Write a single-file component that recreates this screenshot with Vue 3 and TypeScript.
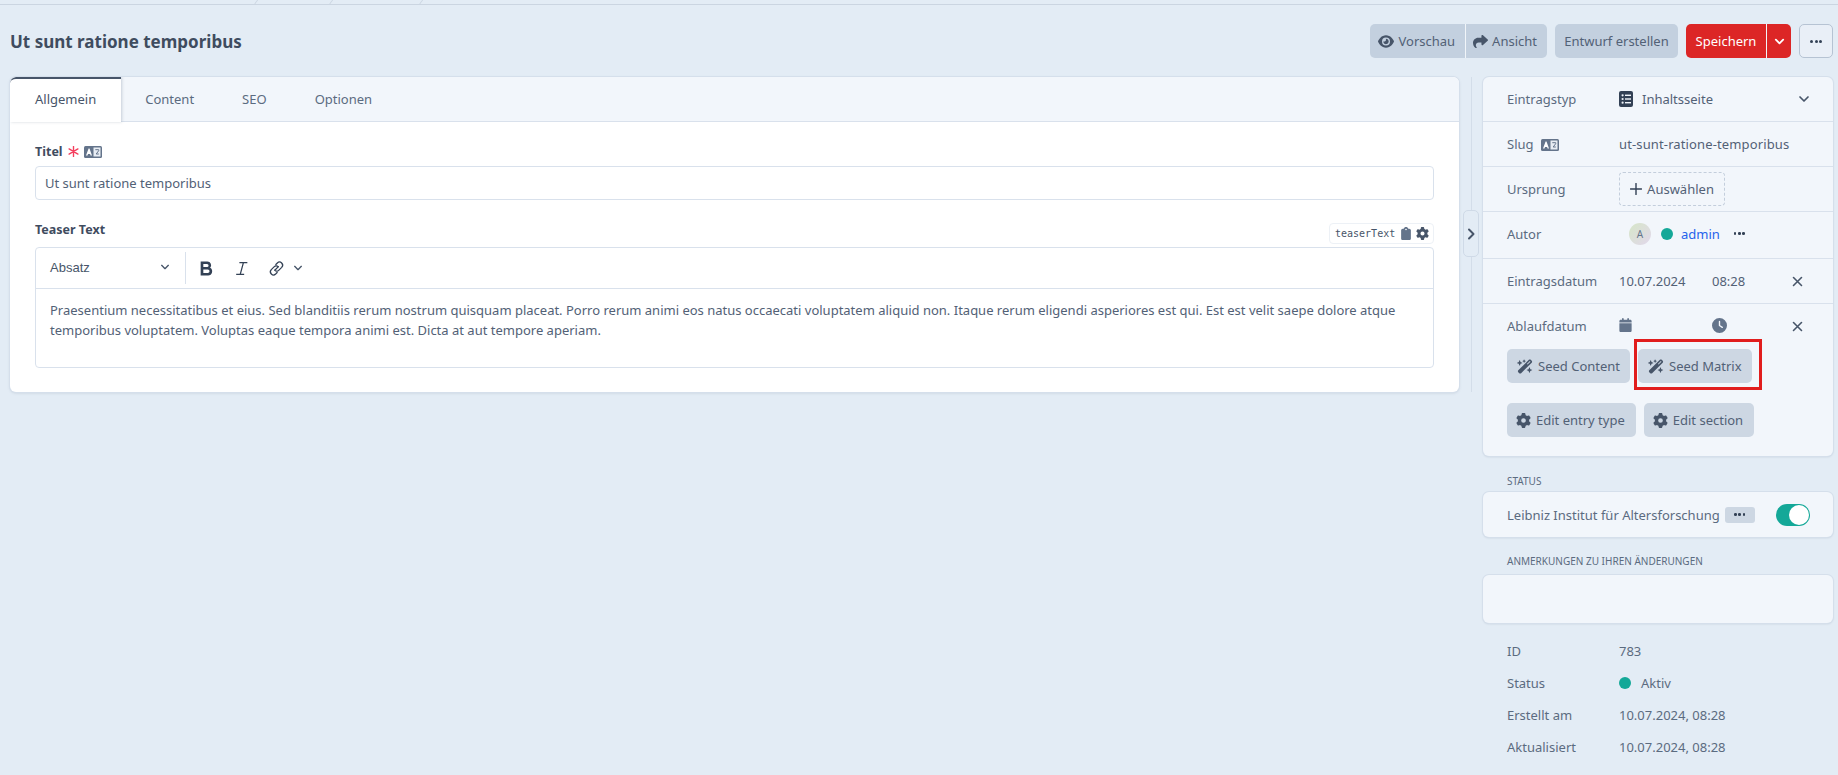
<script setup lang="ts">
const tabs = ['Allgemein', 'Content', 'SEO', 'Optionen']
const teaser = 'Praesentium necessitatibus et eius. Sed blanditiis rerum nostrum quisquam placeat. Porro rerum animi eos natus occaecati voluptatem aliquid non. Itaque rerum eligendi asperiores est qui. Est est velit saepe dolore atque temporibus voluptatem. Voluptas eaque tempora animi est. Dicta at aut tempore aperiam.'
const meta = [
  { label: 'ID', value: '783', dot: false },
  { label: 'Status', value: 'Aktiv', dot: true },
  { label: 'Erstellt am', value: '10.07.2024, 08:28', dot: false },
  { label: 'Aktualisiert', value: '10.07.2024, 08:28', dot: false },
]
const gear = 'M495.9 166.6c3.2 8.7 .5 18.4-6.4 24.6l-43.3 39.4c1.1 8.3 1.7 16.8 1.7 25.4s-.6 17.1-1.7 25.4l43.3 39.4c6.9 6.2 9.6 15.9 6.4 24.6c-4.4 11.9-9.7 23.3-15.8 34.3l-4.7 8.1c-6.6 11-14 21.4-22.1 31.2c-5.9 7.2-15.7 9.6-24.5 6.8l-55.7-17.7c-13.4 10.3-28.2 18.9-44 25.4l-12.5 57.1c-2 9.1-9 16.3-18.2 17.8c-13.8 2.3-28 3.5-42.5 3.5s-28.7-1.2-42.5-3.5c-9.2-1.5-16.2-8.7-18.2-17.8l-12.5-57.1c-15.8-6.5-30.6-15.1-44-25.4L83.1 425.9c-8.8 2.8-18.6 .3-24.5-6.8c-8.1-9.8-15.5-20.2-22.1-31.2l-4.7-8.1c-6.1-11-11.4-22.4-15.8-34.3c-3.2-8.7-.5-18.4 6.4-24.6l43.3-39.4C64.6 273.1 64 264.6 64 256s.6-17.1 1.7-25.4L22.4 191.2c-6.9-6.2-9.6-15.9-6.4-24.6c4.4-11.9 9.7-23.3 15.8-34.3l4.7-8.1c6.6-11 14-21.4 22.1-31.2c5.9-7.2 15.7-9.6 24.5-6.8l55.7 17.7c13.4-10.3 28.2-18.9 44-25.4l12.5-57.1c2-9.1 9-16.3 18.2-17.8C227.3 1.2 241.5 0 256 0s28.7 1.2 42.5 3.5c9.2 1.5 16.2 8.7 18.2 17.8l12.5 57.1c15.8 6.5 30.6 15.1 44 25.4l55.7-17.7c8.8-2.8 18.6-.3 24.5 6.8c8.1 9.8 15.5 20.2 22.1 31.2l4.7 8.1c6.1 11 11.4 22.4 15.8 34.3zM256 336a80 80 0 1 0 0-160 80 80 0 1 0 0 160z'
const wand = 'M234.7 42.7L197 56.8c-3 1.1-5 4-5 7.2s2 6.1 5 7.2l37.7 14.1L248.8 123c1.1 3 4 5 7.2 5s6.1-2 7.2-5l14.1-37.7L315 71.2c3-1.1 5-4 5-7.2s-2-6.1-5-7.2L277.3 42.7 263.2 5c-1.1-3-4-5-7.2-5s-6.1 2-7.2 5L234.7 42.7zM46.1 395.4c-18.7 18.7-18.7 49.1 0 67.9l34.6 34.6c18.7 18.7 49.1 18.7 67.9 0L529.9 116.5c18.7-18.7 18.7-49.1 0-67.9L495.3 14.1c-18.7-18.7-49.1-18.7-67.9 0L46.1 395.4zM484.6 82.6l-105 105-23.3-23.3 105-105 23.3 23.3zM7.5 117.2C3 118.9 0 123.2 0 128s3 9.1 7.5 10.8L64 160l21.2 56.5c1.7 4.5 6 7.5 10.8 7.5s9.1-3 10.8-7.5L128 160l56.5-21.2c4.5-1.7 7.5-6 7.5-10.8s-3-9.1-7.5-10.8L128 96 106.8 39.5C105.1 35 100.8 32 96 32s-9.1 3-10.8 7.5L64 96 7.5 117.2zm352 256c-4.5 1.7-7.5 6-7.5 10.8s3 9.1 7.5 10.8L416 416l21.2 56.5c1.7 4.5 6 7.5 10.8 7.5s9.1-3 10.8-7.5L480 416l56.5-21.2c4.5-1.7 7.5-6 7.5-10.8s-3-9.1-7.5-10.8L480 352l-21.2-56.5c-1.7-4.5-6-7.5-10.8-7.5s-9.1 3-10.8 7.5L416 352l-56.5 21.2z'
</script>

<template>
  <div class="page">
    <div class="crumbs">
      <span class="crumb c1"></span>
      <span class="crumb c2"></span>
      <span class="crumb c3"></span>
    </div>
    <header class="head">
      <h1>Ut sunt ratione temporibus</h1>
      <div class="actions">
        <div class="group">
          <button class="btn first view">
            <svg class="ic16" viewBox="0 0 576 512"><path d="M288 32c-80.8 0-145.5 36.8-192.6 80.6C48.6 156 17.3 208 2.5 243.7c-3.3 7.9-3.3 16.7 0 24.6C17.3 304 48.6 356 95.4 399.4C142.5 443.2 207.2 480 288 480s145.5-36.8 192.6-80.6c46.8-43.5 78.1-95.4 93-131.1c3.3-7.9 3.3-16.7 0-24.6c-14.9-35.7-46.2-87.7-93-131.1C433.5 68.8 368.8 32 288 32zM144 256a144 144 0 1 1 288 0 144 144 0 1 1 -288 0zm144-64c0 35.3-28.7 64-64 64c-7.1 0-13.9-1.2-20.3-3.3c-5.5-1.8-11.9 1.6-11.7 7.4c.3 6.9 1.3 13.8 3.2 20.7c13.7 51.2 66.4 81.6 117.6 67.9s81.6-66.4 67.9-117.6c-11.1-41.5-47.8-69.4-88.6-71.1c-5.8-.2-9.2 6.1-7.4 11.7c2.1 6.4 3.3 13.2 3.3 20.3z"/></svg>
            Vorschau
          </button>
          <button class="btn last view2">
            <svg class="ic15" viewBox="0 0 512 512"><path d="M307 34.8c-11.5 5.1-19 16.6-19 29.2v64H176C78.8 128 0 206.8 0 304C0 417.3 81.5 467.9 100.2 478.1c2.5 1.4 5.3 1.9 8.1 1.9c10.9 0 19.7-8.9 19.7-19.7c0-7.5-4.3-14.4-9.8-19.5C108.8 431.9 96 414.4 96 384c0-53 43-96 96-96h96v64c0 12.6 7.4 24.1 19 29.2s25 3 34.4-5.4l160-144c6.7-6.1 10.6-14.7 10.6-23.8s-3.8-17.7-10.6-23.8l-160-144c-9.4-8.5-22.9-10.6-34.4-5.4z"/></svg>
            Ansicht
          </button>
        </div>
        <button class="btn solo draft">Entwurf erstellen</button>
        <div class="group save">
          <button class="btn red first">Speichern</button>
          <button class="btn red last caret">
            <svg width="11" height="11" viewBox="0 0 12 12"><path d="M2 4l4 4 4-4" fill="none" stroke="#fff" stroke-width="2" stroke-linecap="round" stroke-linejoin="round"/></svg>
          </button>
        </div>
        <button class="more" aria-label="Mehr"><span class="dots"><i></i><i></i><i></i></span></button>
      </div>
    </header>

    <div class="columns">
      <main class="card">
        <nav class="tabs">
          <a v-for="(t, i) in tabs" :key="t" class="tab" :class="{ active: i === 0 }">{{ t }}</a>
        </nav>
        <div class="body">
          <div class="field-head first-head">
            <label class="lbl">Titel</label>
            <svg class="star" viewBox="0 0 12 12"><path d="M6 .5v11M1.2 3.2l9.600 5.600M10.800 3.200l-9.600 5.600" stroke="#f43f5e" stroke-width="1.500" stroke-linecap="round"/></svg>
            <svg class="lang" viewBox="0 0 18 12"><rect width="18" height="12" rx="1.500" fill="#64748b"/><rect x="9.500" y="1.500" width="7" height="9" fill="#e8edf4"/><path d="M2 9.500 4.600 2.500h.9L8 9.500H6.600L6.100 8H4L3.500 9.500z" fill="#fff"/><path d="M11.300 3.700h3.400v1L12.200 8h2.600" fill="none" stroke="#64748b" stroke-width="1"/></svg>
          </div>
          <div class="input">Ut sunt ratione temporibus</div>
          <div class="field-head teaser-head">
            <label class="lbl">Teaser Text</label>
            <div class="handle">
              <code>teaserText</code>
              <svg class="clip" viewBox="0 0 384 512"><path d="M192 0c-41.800 0-77.400 26.700-90.500 64H64C28.700 64 0 92.700 0 128V448c0 35.300 28.700 64 64 64H320c35.300 0 64-28.700 64-64V128c0-35.300-28.700-64-64-64H282.500C269.400 26.700 233.800 0 192 0zm0 64a32 32 0 1 1 0 64 32 32 0 1 1 0-64z" fill="#64748b"/></svg>
              <svg class="ic13" viewBox="0 0 512 512"><path :d="gear" fill="#475569"/></svg>
            </div>
          </div>
          <div class="editor">
            <div class="toolbar">
              <div class="format">
                <span>Absatz</span>
                <svg width="10" height="10" viewBox="0 0 12 12"><path d="M2 4l4 4 4-4" fill="none" stroke="#475569" stroke-width="1.600" stroke-linecap="round" stroke-linejoin="round"/></svg>
              </div>
              <div class="tools">
                <svg class="tool" viewBox="0 0 16 16"><path d="M2.500 1.500h6.300a3.500 3.500 0 0 1 2.600 5.900 3.800 3.800 0 0 1-1.900 7.100h-7zM5 3.800v2.900h3.500a1.450 1.450 0 0 0 0-2.900zm0 5.100v3.300h4.200a1.650 1.650 0 0 0 0-3.300z" fill="#334155" fill-rule="evenodd"/></svg>
                <svg class="tool it" viewBox="0 0 16 16"><path d="M6 2.500h7.500M3 13.500h7.500M9.800 2.500 6.800 13.500" fill="none" stroke="#334155" stroke-width="1.200"/></svg>
                <svg class="tool ln" viewBox="0 0 16 16"><path d="M6.400 9.600 9.800 6.200M7.400 4.200l1.400-1.400a2.900 2.900 0 0 1 4.100 4.100l-2.600 2.600a2.900 2.900 0 0 1-4.100 0M8.600 11.800l-1.400 1.400a2.900 2.900 0 0 1-4.100-4.100l2.600-2.600a2.900 2.900 0 0 1 4.100 0" fill="none" stroke="#334155" stroke-width="1.200" stroke-linecap="round"/></svg>
                <svg width="10" height="10" viewBox="0 0 12 12"><path d="M2 4l4 4 4-4" fill="none" stroke="#475569" stroke-width="1.600" stroke-linecap="round" stroke-linejoin="round"/></svg>
              </div>
            </div>
            <p class="text">{{ teaser }}</p>
          </div>
        </div>
      </main>

      <div class="divider">
        <button class="collapse" aria-label="Einklappen">
          <svg width="9" height="12" viewBox="0 0 9 12"><path d="M2 1.500 6.500 6 2 10.500" fill="none" stroke="#475569" stroke-width="2" stroke-linecap="round" stroke-linejoin="round"/></svg>
        </button>
      </div>

      <aside class="side">
        <section class="panel">
          <div class="row">
            <span class="key">Eintragstyp</span>
            <span class="val type">
              <svg class="typeic" viewBox="0 0 14 16"><rect width="14" height="16" rx="2" fill="#334155"/><g fill="#f1f5fb"><circle cx="3.600" cy="4.300" r="1.100"/><circle cx="3.600" cy="8" r="1.100"/><circle cx="3.600" cy="11.700" r="1.100"/><rect x="6" y="3.600" width="6" height="1.400"/><rect x="6" y="7.300" width="6" height="1.400"/><rect x="6" y="11" width="6" height="1.400"/></g></svg>
              Inhaltsseite
            </span>
            <svg class="end-caret" width="12" height="12" viewBox="0 0 12 12"><path d="M2 4l4 4 4-4" fill="none" stroke="#475569" stroke-width="1.700" stroke-linecap="round" stroke-linejoin="round"/></svg>
          </div>
          <div class="row">
            <span class="key">Slug <svg class="lang gap" viewBox="0 0 18 12"><rect width="18" height="12" rx="1.500" fill="#64748b"/><rect x="9.500" y="1.500" width="7" height="9" fill="#e8edf4"/><path d="M2 9.500 4.600 2.500h.9L8 9.500H6.600L6.100 8H4L3.500 9.500z" fill="#fff"/><path d="M11.300 3.700h3.400v1L12.200 8h2.600" fill="none" stroke="#64748b" stroke-width="1"/></svg></span>
            <span class="val slug">ut-sunt-ratione-temporibus</span>
          </div>
          <div class="row">
            <span class="key">Ursprung</span>
            <span class="pick"><svg width="12" height="12" viewBox="0 0 12 12"><path d="M6 .5v11M.5 6h11" stroke="#334155" stroke-width="1.400" stroke-linecap="round"/></svg> Auswählen</span>
          </div>
          <div class="row author">
            <span class="key">Autor</span>
            <span class="avatar">A</span>
            <span class="dot"></span>
            <a class="admin">admin</a>
            <span class="dots small"><i></i><i></i><i></i></span>
          </div>
          <div class="row date">
            <span class="key">Eintragsdatum</span>
            <span class="val d1">10.07.2024</span>
            <span class="val d2">08:28</span>
            <svg class="x" width="11" height="11" viewBox="0 0 11 11"><path d="M1.500 1.500l8 8M9.500 1.500l-8 8" stroke="#475569" stroke-width="1.600" stroke-linecap="round"/></svg>
          </div>
          <div class="block">
            <div class="expiry">
              <span class="key">Ablaufdatum</span>
              <svg class="cal" viewBox="0 0 448 512"><path d="M96 32V64H48C21.500 64 0 85.500 0 112v48H448V112c0-26.500-21.500-48-48-48H352V32c0-17.700-14.300-32-32-32s-32 14.300-32 32V64H160V32c0-17.700-14.300-32-32-32S96 14.300 96 32zM448 192H0V464c0 26.500 21.500 48 48 48H400c26.500 0 48-21.500 48-48V192z" fill="#64748b"/></svg>
              <svg class="clock" viewBox="0 0 512 512"><path d="M256 0a256 256 0 1 1 0 512A256 256 0 1 1 256 0zM232 120V256c0 8 4 15.500 10.700 20l96 64c11 7.400 25.900 4.400 33.300-6.700s4.400-25.900-6.700-33.300L280 243.200V120c0-13.300-10.700-24-24-24s-24 10.700-24 24z" fill="#64748b"/></svg>
              <svg class="x" width="11" height="11" viewBox="0 0 11 11"><path d="M1.500 1.500l8 8M9.500 1.500l-8 8" stroke="#475569" stroke-width="1.600" stroke-linecap="round"/></svg>
            </div>
            <div class="tools-row seed">
              <button class="btn sm">
                <svg class="wand" viewBox="0 0 576 512"><path :d="wand" fill="#475569"/></svg>
                Seed Content
              </button>
              <button class="btn sm marked">
                <svg class="wand" viewBox="0 0 576 512"><path :d="wand" fill="#475569"/></svg>
                Seed Matrix
                <span class="highlight"></span>
              </button>
            </div>
            <div class="tools-row">
              <button class="btn sm">
                <svg class="ic14" viewBox="0 0 512 512"><path :d="gear" fill="#475569"/></svg>
                Edit entry type
              </button>
              <button class="btn sm">
                <svg class="ic14" viewBox="0 0 512 512"><path :d="gear" fill="#475569"/></svg>
                Edit section
              </button>
            </div>
          </div>
        </section>

        <h2 class="cap status-cap">STATUS</h2>
        <section class="panel site">
          <span class="key">Leibniz Institut für Altersforschung</span>
          <span class="chip"><span class="dots small"><i></i><i></i><i></i></span></span>
          <span class="toggle"><span class="knob"></span></span>
        </section>

        <h2 class="cap notes-cap">ANMERKUNGEN ZU IHREN ÄNDERUNGEN</h2>
        <section class="panel notes"></section>

        <dl class="meta">
          <div v-for="m in meta" :key="m.label" class="meta-row">
            <dt>{{ m.label }}</dt>
            <dd><span v-if="m.dot" class="dot meta-dot"></span>{{ m.value }}</dd>
          </div>
        </dl>
      </aside>
    </div>
  </div>
</template>

<style>
html, body { margin: 0; background: #e3ecf5; overflow: hidden; }
</style>

<style scoped>
* { box-sizing: border-box; }
.page {
  width: 1838px;
  height: 775px;
  overflow: hidden;
  padding: 0 5px 0 10px;
  background: #e3ecf5;
  color: #475569;
  font-family: "Noto Sans", "Open Sans", sans-serif;
  font-size: 13px;
}
.crumbs {
  height: 5px;
  margin: 0 -5px 0 -10px;
  border-bottom: 1px solid #cbd5e1;
  position: relative;
}
.crumb { position: absolute; bottom: 0; width: 1px; height: 5px; background: #cbd5e1; transform: skewX(-35deg); }
.c1 { left: 256px; }
.c2 { left: 331px; }
.c3 { left: 421px; }
.head { display: flex; align-items: center; justify-content: space-between; height: 72px; }
h1 { margin: 0; font-size: 17px; font-weight: 700; color: #3f4c5f; }
.actions { display: flex; gap: 8px; align-items: center; }
.group { display: flex; }
.btn {
  height: 34px;
  border: 0;
  border-radius: 5px;
  background: #c3d0df;
  color: #526176;
  font: inherit;
  display: inline-flex;
  align-items: center;
  gap: 5px;
  padding: 0 10px;
  white-space: nowrap;
}
.first { border-radius: 5px 0 0 5px; border-right: 1px solid #f1f5f9; }
.last { border-radius: 0 5px 5px 0; }
.view { padding: 0 10px 0 8px; }
.view2 { padding: 0 10px 0 7px; gap: 4px; }
.draft { width: 123px; padding: 0; justify-content: center; }
.red { background: #dc2626; color: #fff; }
.red.first { width: 81px; padding: 0; justify-content: center; }
.caret { padding: 0; width: 24px; justify-content: center; }
.more {
  width: 34px; height: 34px; border-radius: 5px;
  border: 1px solid #b6c3d3; background: #e9eff7;
  display: flex; align-items: center; justify-content: center; padding: 0;
}
.dots { display: inline-flex; gap: 1.5px; }
.dots i { width: 3px; height: 3px; border-radius: 50%; background: #334155; display: block; }
.ic16 { width: 16px; height: 15px; fill: #475569; flex: none; }
.ic15 { width: 15px; height: 15px; fill: #475569; flex: none; }
.clip { width: 10px; height: 13px; flex: none; margin-left: 6px; }
.ic13 { width: 13px; height: 13px; flex: none; margin-left: 5px; }
.ic14 { width: 15px; height: 15px; flex: none; }
.wand { width: 16px; height: 15px; flex: none; }

.columns { display: flex; align-items: flex-start; }
.card {
  width: 1449px;
  height: 315px;
  background: #fff;
  border-radius: 6px;
  box-shadow: 0 0 0 1px #d5dfeb, 0 1px 3px rgba(100,116,139,.25);
  overflow: hidden;
}
.tabs { height: 45px; display: flex; background: #f2f6fb; border-bottom: 1px solid #d9e1ec; }
.tab { height: 44px; padding: 0 24px; line-height: 44px; color: #5b6b80; }
.tab.active {
  padding: 0 25px; background: #fff; color: #475569;
  border-top: 2px solid #475569; line-height: 41px; border-radius: 6px 0 0 0; height: 45px;
  box-shadow: 1px 0 3px rgba(100,116,139,.3);
}
.body { padding: 0 25px; }
.field-head { display: flex; align-items: center; }
.first-head { height: 44px; padding-top: 15px; }
.lbl { font-weight: 700; color: #3f4c5f; font-size: 12.5px; }
.star { width: 11px; height: 11px; margin-left: 5px; }
.lang { width: 18px; height: 12px; margin-left: 5px; }
.lang.gap { margin-left: 4px; vertical-align: -2px; }
.input {
  height: 34px; border: 1px solid #d9e1ec; border-radius: 4px; padding: 0 9px;
  line-height: 32px; color: #526176; background: #fff;
}
.teaser-head { height: 47px; justify-content: space-between; padding-top: 11px; }
.handle {
  height: 21px; width: 105px; border: 1px solid #edf1f6; border-radius: 4px;
  display: flex; align-items: center; padding: 0 4px 0 5px; margin-top: 8px;
}
.handle code { font-family: "DejaVu Sans Mono", monospace; font-size: 10px; color: #475569; }
.editor { height: 121px; border: 1px solid #d9e1ec; border-radius: 4px; }
.toolbar { height: 41px; display: flex; align-items: center; border-bottom: 1px solid #d9e1ec; }
.format {
  width: 150px; height: 32px; padding: 0 15px 2px 14px; border-right: 1px solid #d9e1ec;
  display: flex; align-items: center; justify-content: space-between;
  font-family: "Liberation Sans", sans-serif; font-size: 13px; color: #475569;
}
.tools { display: flex; align-items: center; padding-left: 12px; }
.tool { width: 17px; height: 17px; }
.it { margin-left: 18px; }
.ln { margin-left: 18px; }
.tools > svg:last-child { margin-left: 8px; }
.text {
  margin: 0; padding: 11px 14px 0;
  font-size: 13px; line-height: 20px; color: #526176;
}
.divider { width: 24px; height: 315px; flex: none; position: relative; }
.divider::before { content: ""; position: absolute; left: 12px; top: 0; bottom: 0; width: 1px; background: #d3dde9; }
.collapse {
  position: absolute; left: 4px; top: 133px; width: 16px; height: 47px; padding: 0;
  background: #e3ecf5; border: 1px solid #cfdae7; border-radius: 5px;
  display: flex; align-items: center; justify-content: center;
}
.side { width: 350px; flex: none; }
.panel {
  background: #f2f6fb; border-radius: 6px;
  box-shadow: 0 0 0 1px #d5dfeb, 0 1px 2px rgba(100,116,139,.25);
}
.row {
  height: 45px; display: flex; align-items: center; padding: 0 24px;
  border-bottom: 1px solid #d9e1ec; position: relative;
}
.key { width: 112px; flex: none; color: #5b6b80; white-space: nowrap; }
.val { color: #526176; white-space: nowrap; flex: none; }
.slug { letter-spacing: .13px; }
.type { display: inline-flex; align-items: center; gap: 9px; }
.typeic { width: 14px; height: 16px; flex: none; }
.end-caret { margin-left: auto; margin-right: -1px; }
.pick {
  height: 34px; width: 106px; border: 1px dashed #c3cedc; border-radius: 4px;
  display: inline-flex; align-items: center; justify-content: center; gap: 5px; color: #526176;
}
.author { height: 47px; padding-bottom: 3px; }
.avatar {
  width: 22px; height: 22px; border-radius: 50%; margin-left: 10px;
  background: linear-gradient(135deg, #d6e6c8, #e2d8ec); font-size: 10px;
  display: flex; align-items: center; justify-content: center; color: #64748b;
}
.dot { width: 12px; height: 12px; border-radius: 50%; background: #14a898; display: inline-block; }
.author .dot { margin-left: 10px; }
.admin { color: #2563eb; margin-left: 8px; }
.author .dots { margin-left: 14px; }
.d1 { width: 93px; }
.d2 { width: 80px; }
.block { padding: 0 24px 19px; }
.expiry { height: 45px; display: flex; align-items: center; padding-bottom: 1px; }
.cal { width: 13px; height: 14px; margin-top: -2px; flex: none; }
.clock { width: 15px; height: 15px; margin-left: 80px; margin-top: -2px; flex: none; }
.x { flex: none; }
.expiry .x { margin-left: 65px; }
.tools-row { display: flex; gap: 8px; margin-bottom: 20px; }
.tools-row:last-child { margin-bottom: 0; }
.sm { background: #cdd7e3; gap: 5px; padding: 0 11px 0 9px; }
.seed .btn { gap: 5px; padding: 0 10px; }
.marked { position: relative; }
.highlight {
  position: absolute; left: -4px; top: -10px; width: 128px; height: 51px;
  border: 3px solid #e11d1d; pointer-events: none;
}
.cap { margin: 0; font-weight: 400; font-size: 10px; color: #5b6b80; padding-left: 24px; }
.status-cap { height: 36px; padding-top: 18px; line-height: 14px; }
.site { height: 45px; display: flex; align-items: center; padding: 0 24px; }
.site .key { width: auto; }
.chip {
  width: 30px; height: 16px; border-radius: 3px; background: #cdd7e3; margin-left: 5px;
  display: flex; align-items: center; justify-content: center;
}
.small i { width: 2.6px; height: 2.6px; }
.toggle {
  width: 34px; height: 22px; border-radius: 11px; background: #14a898; margin-left: auto; margin-right: -1px; position: relative;
}
.knob { position: absolute; right: 1px; top: 1px; width: 20px; height: 20px; border-radius: 50%; background: #fff; }
.notes-cap { height: 38px; padding-top: 17px; line-height: 14px; }
.notes { height: 48px; }
.meta { margin: 12px 0 0; padding: 0 24px; }
.meta-row { height: 32px; display: flex; align-items: center; }
dt { width: 112px; color: #5b6b80; }
dd { margin: 0; color: #5b6b80; display: flex; align-items: center; }
.meta-dot { margin-right: 10px; }
</style>
